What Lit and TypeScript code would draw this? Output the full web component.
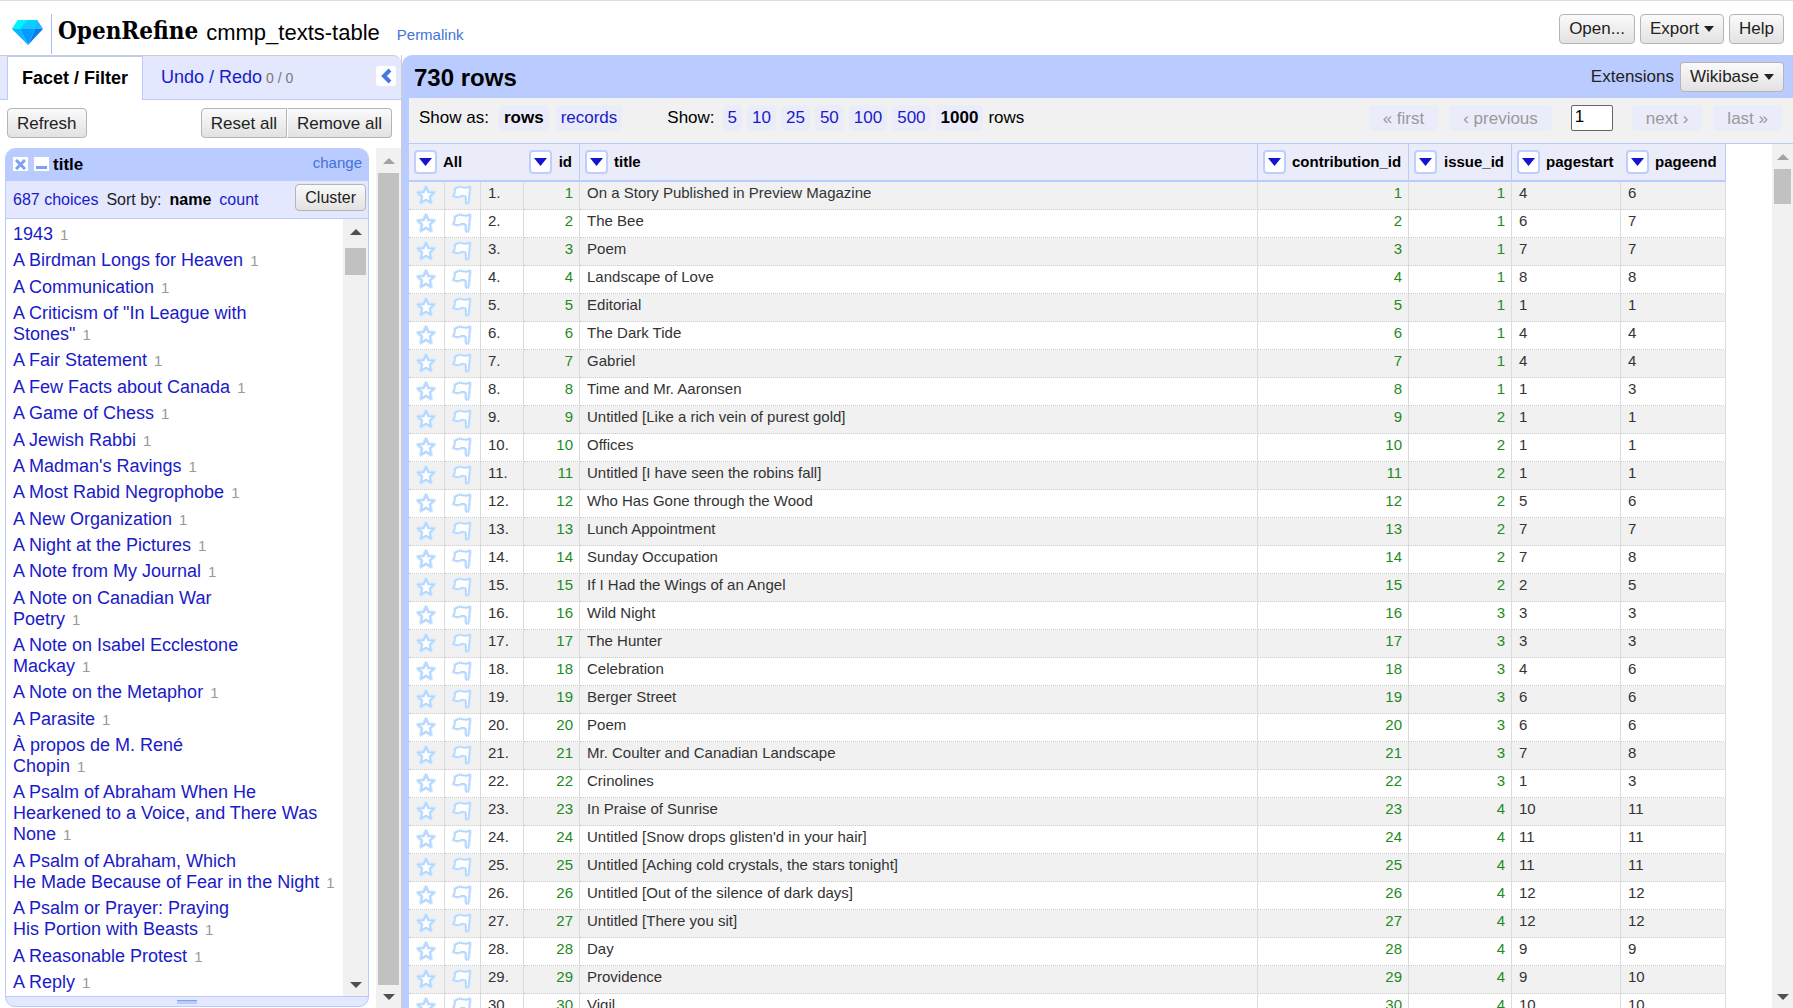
import { LitElement, html, css, svg } from "lit";
import { customElement, state } from "lit/decorators.js";

type Row = [title: string, issue: number, start: number, end: number];

const ROWS: Row[] = [
  ["On a Story Published in Preview Magazine", 1, 4, 6],
  ["The Bee", 1, 6, 7],
  ["Poem", 1, 7, 7],
  ["Landscape of Love", 1, 8, 8],
  ["Editorial", 1, 1, 1],
  ["The Dark Tide", 1, 4, 4],
  ["Gabriel", 1, 4, 4],
  ["Time and Mr. Aaronsen", 1, 1, 3],
  ["Untitled [Like a rich vein of purest gold]", 2, 1, 1],
  ["Offices", 2, 1, 1],
  ["Untitled [I have seen the robins fall]", 2, 1, 1],
  ["Who Has Gone through the Wood", 2, 5, 6],
  ["Lunch Appointment", 2, 7, 7],
  ["Sunday Occupation", 2, 7, 8],
  ["If I Had the Wings of an Angel", 2, 2, 5],
  ["Wild Night", 3, 3, 3],
  ["The Hunter", 3, 3, 3],
  ["Celebration", 3, 4, 6],
  ["Berger Street", 3, 6, 6],
  ["Poem", 3, 6, 6],
  ["Mr. Coulter and Canadian Landscape", 3, 7, 8],
  ["Crinolines", 3, 1, 3],
  ["In Praise of Sunrise", 4, 10, 11],
  ["Untitled [Snow drops glisten'd in your hair]", 4, 11, 11],
  ["Untitled [Aching cold crystals, the stars tonight]", 4, 11, 11],
  ["Untitled [Out of the silence of dark days]", 4, 12, 12],
  ["Untitled [There you sit]", 4, 12, 12],
  ["Day", 4, 9, 9],
  ["Providence", 4, 9, 10],
  ["Vigil", 4, 10, 10],
];

/* A newline marks a hard break inside a choice. */
const CHOICES = [
  "1943",
  "A Birdman Longs for Heaven",
  "A Communication",
  "A Criticism of \"In League with\nStones\"",
  "A Fair Statement",
  "A Few Facts about Canada",
  "A Game of Chess",
  "A Jewish Rabbi",
  "A Madman's Ravings",
  "A Most Rabid Negrophobe",
  "A New Organization",
  "A Night at the Pictures",
  "A Note from My Journal",
  "A Note on Canadian War\nPoetry",
  "A Note on Isabel Ecclestone\nMackay",
  "A Note on the Metaphor",
  "A Parasite",
  "À propos de M. René\nChopin",
  "A Psalm of Abraham When He\nHearkened to a Voice, and There Was\nNone",
  "A Psalm of Abraham, Which\nHe Made Because of Fear in the Night",
  "A Psalm or Prayer: Praying\nHis Portion with Beasts",
  "A Reasonable Protest",
  "A Reply",
];

const PAGE_SIZES = [5, 10, 25, 50, 100, 500, 1000];

const star = svg`<svg width="22" height="22" viewBox="0 0 22 22" fill="#fff" stroke-linejoin="round">
  <path d="M11 3 13.200 8.200 19 8.600 14.700 12.500 16 18.600 11 15.600 6 18.600 7.300 12.500 3 8.600 8.800 8.200Z" stroke="#d8e9ff" stroke-width="4"/>
  <path d="M11 3 13.200 8.200 19 8.600 14.700 12.500 16 18.600 11 15.600 6 18.600 7.300 12.500 3 8.600 8.800 8.200Z" stroke="#b4d8ff" stroke-width="2"/>
</svg>`;

const flag = svg`<svg width="22" height="22" viewBox="0 0 22 22" fill="#fff" stroke-linejoin="round">
  <path d="M4 5Q8 2 11.500 3.500Q15 4.500 19 3L17.500 18Q16.500 20.500 15 18.500L15 13Q12.500 10.500 9 12.500Q5.500 13.500 2.500 12Q4.500 9 4 5Z" stroke="#d8e9ff" stroke-width="3.500"/>
  <path d="M4 5Q8 2 11.500 3.500Q15 4.500 19 3L17.500 18Q16.500 20.500 15 18.500L15 13Q12.500 10.500 9 12.500Q5.500 13.500 2.500 12Q4.500 9 4 5Z" stroke="#b4d8ff" stroke-width="1.700"/>
</svg>`;

const triangle = (w: number, h: number, up = false) => html`<svg class="tri" width=${w} height=${h} viewBox="0 0 10 5" preserveAspectRatio="none">
  <path fill="currentColor" d=${up ? "M0 5 5 0 10 5Z" : "M0 0H10L5 5Z"}></path>
</svg>`;

@customElement("scroll-rail")
export class ScrollRail extends LitElement {
  static properties = { top: { type: Boolean }, size: {} };
  declare top: boolean;
  declare size: string;

  static styles = css`
    :host { display: flex; flex-direction: column; width: 25px; background: #f1f1f1; color: #505050; }
    .cap { flex: none; height: 25px; display: flex; align-items: center; justify-content: center; }
    .cap.dim { color: #a3a3a3; }
    .cap.end { height: 23px; }
    .track { flex: 1; padding: 0 2px; }
    .thumb { background: #c1c1c1; }
    .offset { padding-top: 4px; }
    .tri { display: block; }
  `;

  render() {
    return html`
      <div class="cap ${this.top ? "dim" : ""}">${triangle(12, 6, true)}</div>
      <div class="track ${this.top ? "" : "offset"}"><div class="thumb" style="height:${this.size}"></div></div>
      <div class="cap end">${triangle(12, 6)}</div>
    `;
  }
}

@customElement("app-root")
export class AppRoot extends LitElement {
  @state() private page = "1";

  static styles = css`
    :host {
      display: flex; flex-direction: column; height: 100vh; overflow: hidden;
      box-sizing: border-box; border-top: 1px solid #dedede; background: #fff;
      font: 17px/21px "Liberation Sans", Arial, sans-serif; color: #000;
    }
    *, *::before { box-sizing: border-box; }
    a { color: #1a1ac8; text-decoration: none; }
    button { font: inherit; color: inherit; margin: 0; padding: 0; border: 0; background: none; cursor: pointer; }
    svg { display: block; }

    .top { flex: none; height: 54px; display: flex; align-items: center; padding: 0 9px 0 12px; }
    .brand { display: flex; align-items: center; color: #000; }
    .mark { height: 40px; margin-top: 12px; padding-right: 8px; border-right: 1px solid #a9bdf8; display: flex; align-items: center; }
    .mark svg { margin-bottom: 4px; }
    .name { margin-left: 6px; font: bold 24px/30px "DejaVu Serif Condensed", "DejaVu Serif", serif; padding-top: 6px; }
    .project { font-size: 22px; line-height: 30px; margin: 0 0 0 8px; font-weight: normal; padding-top: 9px; }
    .perma { color: #4272db; font-size: 15px; margin-left: 17px; padding-top: 12px; }
    .actions { margin-left: auto; display: flex; gap: 5px; padding-top: 1px; }

    .btn {
      height: 30px; padding: 0 9px; display: flex; align-items: center; gap: 5px;
      border: 1px solid #b5b5b5; border-radius: 4px; color: #222; white-space: nowrap;
      background: linear-gradient(#fafafa, #e2e2e2);
    }
    .btn.small { font-size: 16px; height: 27px; }

    .main { flex: 1; min-height: 0; display: flex; }
    .left { flex: none; width: 402px; display: flex; flex-direction: column; border-right: 1px solid #ccc; }
    .tabs {
      flex: none; height: 45px; display: flex; align-items: flex-end; padding: 0 5px 0 7px; font-size: 18px;
      background: #e3e8ff; border-top: 1px solid #ccc; border-bottom: 1px solid #b9caff; border-top-right-radius: 8px;
    }
    .tab { height: 43px; display: flex; align-items: center; gap: 4px; color: #1a1ac8; padding: 0 18px; }
    .tab.on { color: #000; font-weight: bold; background: #fff; border: 1px solid #b9caff; border-bottom: 0; padding: 0 14px; margin-bottom: -1px; height: 44px; }
    .tab small { font-size: 14px; color: #777; padding-top: 2px; }
    .fold { width: 20px; height: 20px; border-radius: 3px; background: #fff; margin: 0 0 13px auto; display: grid; place-items: center; }
    .bar { flex: none; display: flex; justify-content: space-between; padding: 8px 9px 10px 7px; }
    .pair { display: flex; }
    .pair .btn:first-child { border-radius: 4px 0 0 4px; border-right-color: #b5b5b5; }
    .pair .btn:last-child { border-radius: 0 4px 4px 0; border-left-color: #fff; }

    .facets { flex: 1; min-height: 0; display: flex; justify-content: space-between; padding-left: 5px; }
    .facet { width: 364px; margin-bottom: 1px; border: 1px solid #b9caff; border-radius: 10px; overflow: hidden; display: flex; flex-direction: column; background: #e3e8ff; }
    .fhead { flex: none; height: 32px; display: flex; align-items: center; gap: 6px; padding: 0 6px 2px 7px; background: #bacbff; }
    .fhead h2 { margin: 0; font-size: 17px; line-height: 20px; padding-top: 2px; margin-left: -2px; }
    .fhead a { margin-left: auto; font-size: 15px; line-height: 20px; padding-bottom: 2px; color: #4272db; }
    .sq { width: 15px; height: 14px; background: #fff; display: grid; place-items: center; }
    .fctl { flex: none; height: 38px; display: flex; align-items: center; padding: 0 2px 1px 7px; font-size: 16px; border-bottom: 1px solid #b9caff; color: #222; }
    .fctl .sort { margin: 0 8px; }
    .fctl b { color: #000; margin-right: 8px; }
    .fctl .btn { margin: 0 0 4px auto; }
    .flist { flex: 1; min-height: 0; display: flex; background: #fff; border-bottom: 1px solid #b9caff; }
    .flist ul { flex: 1; margin: 0; padding: 5px 0 3px 7px; list-style: none; display: flex; flex-direction: column; justify-content: space-between; }
    .flist li { flex: none; white-space: pre-line; color: #1a1ac8; font-size: 18px; }
    .flist li span { font-size: 15px; line-height: 18px; color: #999; margin-left: 2px; }
    .grip { flex: none; height: 9px; display: grid; place-items: center; }
    .grip i { width: 20px; height: 4px; background: #b9caff; border-top: 1px solid #7ea0ee; }

    .right { flex: 1; min-width: 0; display: flex; flex-direction: column; background: #bacbff; border-top-left-radius: 10px; padding-left: 7px; }
    .summary { flex: none; height: 43px; display: flex; align-items: center; padding: 0 9px 0 5px; }
    .summary h1 { margin: 0; font-size: 24px; line-height: 30px; padding-top: 2px; }
    .ext { margin-left: auto; display: flex; align-items: center; gap: 6px; color: #222; }
    .controls { flex: none; height: 46px; display: flex; align-items: flex-start; padding: 7px 11px 0 10px; background: #f1f1f1; border-bottom: 1px solid #b9caff; }
    .opts { display: flex; align-items: center; gap: 5px; line-height: 26px; white-space: nowrap; }
    .opts a, .opts b { background: #ebecf9; border-radius: 5px; padding: 0 5px; }
    .opts .lead { margin-right: 3px; }
    .opts:first-child { gap: 7px; }
    .opts + .opts { margin-left: 45px; }
    .pager { margin-left: auto; display: flex; align-items: center; gap: 11px; }
    .pager button { height: 26px; padding: 0 14px; background: #ebecf9; border-radius: 5px; color: #999; white-space: nowrap; }
    .pager input { width: 42px; height: 26px; margin: 0 8px; padding: 0 3px 2px; border: 1px solid #666; border-radius: 2px; font: inherit; background: #fff; }

    .body { flex: 1; min-height: 0; display: flex; background: #fff; }
    .grid { flex: 1; min-width: 0; overflow: hidden; padding-right: 46px; }
    .body scroll-rail { width: 21px; }
    table { width: 100%; table-layout: fixed; border-collapse: separate; border-spacing: 0; font-size: 15px; line-height: 18px; color: #333; }
    .c-icon { width: 36px; } .c-idx { width: 43px; } .c-id { width: 56px; }
    .c-con { width: 151px; } .c-iss { width: 103px; } .c-ps { width: 109px; } .c-pe { width: 105px; }
    th { height: 38px; padding: 0 7px 0 5px; background: #ebecf9; border-bottom: 2px solid #bacbff; color: #000; text-align: left; }
    th.line { border-right: 1px solid #b9caff; }
    .h { display: flex; align-items: center; gap: 6px; }
    .h.push { justify-content: space-between; }
    .menu { flex: none; width: 23px; height: 24px; border: 2px solid #c0ceff; border-radius: 4px; background: #fff; color: #1414d2; display: grid; place-items: center; }
    td { height: 28px; padding: 2px 6px 7px 7px; vertical-align: top; border-right: 1px solid #dcdcdc; border-bottom: 1px dotted #ccc; white-space: nowrap; }
    td.icon { padding: 2px 0 0 6px; }
    td.num { text-align: right; color: #1f8a1f; }
    tbody tr:nth-child(odd) { background: #f1f1f1; }
  `;

  private header(name: string, cls = "", push = false) {
    return html`<th class=${cls} scope="col">
      <div class="h ${push ? "push" : ""}">
        <button class="menu" aria-label="${name} column menu">${triangle(13, 8)}</button>${name}
      </div>
    </th>`;
  }

  private facet() {
    return html`<section class="facet">
      <div class="fhead">
        <button class="sq" aria-label="Remove facet"><svg width="11" height="11" viewBox="0 0 11 11" stroke="#7ea0ee" stroke-width="3"><path d="M1 1 10 10M10 1 1 10"/></svg></button>
        <button class="sq" aria-label="Minimize facet"><svg width="11" height="11" viewBox="0 0 11 11" stroke="#7ea0ee" stroke-width="3"><path d="M0 8.500H11"/></svg></button>
        <h2>title</h2>
        <a href="#change">change</a>
      </div>
      <div class="fctl">
        <a href="#choices">687 choices</a>
        <span class="sort">Sort by:</span><b>name</b><a href="#count">count</a>
        <button class="btn small">Cluster</button>
      </div>
      <div class="flist">
        <ul>${CHOICES.map((c) => html`<li><a href="#choice">${c}</a> <span>1</span></li>`)}</ul>
        <scroll-rail size="27px"></scroll-rail>
      </div>
      <div class="grip"><i></i></div>
    </section>`;
  }

  render() {
    return html`
      <header class="top">
        <a class="brand" href="#home">
          <span class="mark">
            <svg width="31" height="25" viewBox="0 0 31 25">
              <path fill="#00d4ff" d="M6 0H25L31 9H0Z"/><path fill="#00f4ff" d="M6 0H16L8 9H0Z"/>
              <path fill="#28b4ff" d="M25 0 31 9H23Z"/><path fill="#12c8ff" d="M16 0 23 9H8Z"/>
              <path fill="#0ab4ff" d="M0 9H8L16 25Z"/><path fill="#009cff" d="M8 9H23L16 25Z"/><path fill="#0080f0" d="M23 9H31L16 25Z"/>
            </svg>
          </span>
          <span class="name">OpenRefine</span>
        </a>
        <h1 class="project">cmmp_texts-table</h1>
        <a class="perma" href="#permalink">Permalink</a>
        <div class="actions">
          <button class="btn">Open...</button>
          <button class="btn">Export ${triangle(10, 6)}</button>
          <button class="btn">Help</button>
        </div>
      </header>
      <div class="main">
        <aside class="left">
          <nav class="tabs">
            <a class="tab on" href="#facets">Facet / Filter</a>
            <a class="tab" href="#history">Undo / Redo <small>0 / 0</small></a>
            <button class="fold" aria-label="Hide panel"><svg width="12" height="16" viewBox="0 0 12 16" fill="none" stroke="#4876e0" stroke-width="4"><path d="M10 2 4 8 10 14"/></svg></button>
          </nav>
          <div class="bar">
            <button class="btn">Refresh</button>
            <div class="pair"><button class="btn">Reset all</button><button class="btn">Remove all</button></div>
          </div>
          <div class="facets">${this.facet()}<scroll-rail top size="100%"></scroll-rail></div>
        </aside>
        <main class="right">
          <div class="summary">
            <h1>730 rows</h1>
            <div class="ext">Extensions <button class="btn">Wikibase ${triangle(10, 6)}</button></div>
          </div>
          <div class="controls">
            <div class="opts"><span class="lead">Show as:</span><b>rows</b><a href="#records">records</a></div>
            <div class="opts"><span class="lead">Show:</span>
              ${PAGE_SIZES.map((n) => n === 1000 ? html`<b>${n}</b>` : html`<a href="#size">${n}</a>`)}
              <span>rows</span>
            </div>
            <div class="pager">
              <button>« first</button><button>‹ previous</button>
              <input aria-label="Page" .value=${this.page} @input=${(e: Event) => { this.page = (e.target as HTMLInputElement).value; }}>
              <button>next ›</button><button>last »</button>
            </div>
          </div>
          <div class="body">
            <div class="grid">
              <table>
                <colgroup>
                  <col class="c-icon"><col class="c-icon"><col class="c-idx"><col class="c-id"><col>
                  <col class="c-con"><col class="c-iss"><col class="c-ps"><col class="c-pe">
                </colgroup>
                <thead><tr>
                  <th colspan="3" scope="col"><div class="h"><button class="menu" aria-label="All columns menu">${triangle(13, 8)}</button>All</div></th>
                  ${this.header("id", "line", true)}
                  ${this.header("title", "line")}
                  ${this.header("contribution_id", "line", true)}
                  ${this.header("issue_id", "line", true)}
                  ${this.header("pagestart")}
                  ${this.header("pageend", "line")}
                </tr></thead>
                <tbody>
                  ${ROWS.map(([title, issue, start, end], i) => html`<tr>
                    <td class="icon">${star}</td><td class="icon">${flag}</td><td>${i + 1}.</td>
                    <td class="num">${i + 1}</td><td>${title}</td><td class="num">${i + 1}</td>
                    <td class="num">${issue}</td><td>${start}</td><td>${end}</td>
                  </tr>`)}
                </tbody>
              </table>
            </div>
            <scroll-rail top size="35px"></scroll-rail>
          </div>
        </main>
      </div>
    `;
  }
}
